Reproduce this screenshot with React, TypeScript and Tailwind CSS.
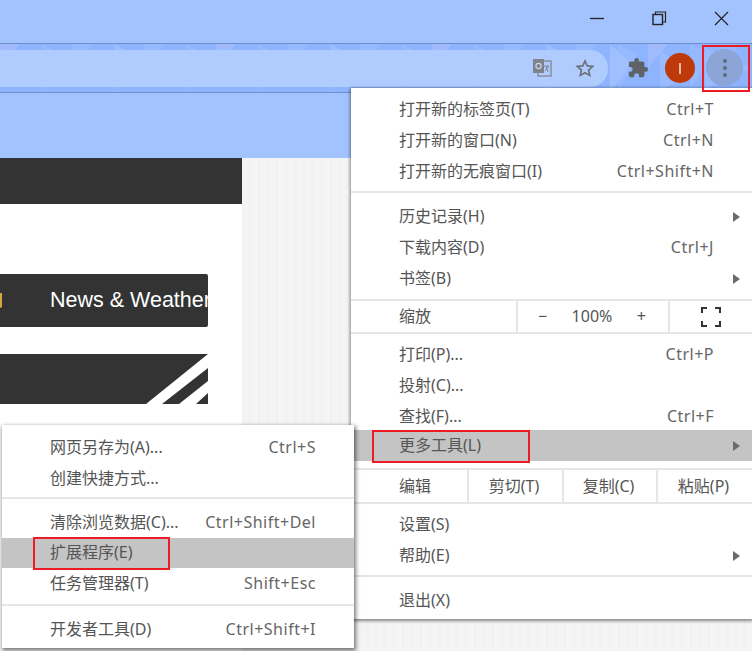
const fontStack = { fontFamily: '"Noto Sans", "Noto Sans CJK SC", sans-serif' }

type RowProps = {
  label: string
  keys?: string
  arrow?: boolean
  active?: boolean
  h?: string
  right?: string
}

function Row({ label, keys, arrow, active, h = "h-[31px]", right = "pr-[38px]" }: RowProps) {
  return (
    <div className={`${h} ${right} pl-[48px] pb-[2px] flex items-center justify-between relative text-[16px] text-[#555555] ${active ? "bg-[#c4c4c4]" : ""}`}>
      <span className="whitespace-nowrap">{label}</span>
      {keys && <span className="text-[#666666] tracking-[0.5px] whitespace-nowrap">{keys}</span>}
      {arrow && <span className="absolute right-[12px] top-1/2 -translate-y-1/2 border-l-[7px] border-l-[#6b6b6b] border-y-[5px] border-y-transparent" />}
    </div>
  )
}

function Sep({ className = "" }: { className?: string }) {
  return <div className={`h-[2px] bg-[#e6e6e6] ${className}`} />
}

function TrianglePattern() {
  const tris: string[] = []
  for (let i = 0; i < 22; i++) {
    const x = i * 36 + (i % 2 ? 6 : 0)
    tris.push(`${x},0 ${x + 20},${i % 2 ? 10 : 0} ${x},${i % 2 ? 48 : 24}`)
  }
  return (
    <svg className="absolute inset-0 w-full h-full" viewBox="0 0 752 48" preserveAspectRatio="none">
      {tris.map((p, i) => (
        <polygon key={i} points={p} fill={i % 3 === 0 ? "#a0bbfd" : "#97b9ff"} />
      ))}
      <polygon points="610,0 632,20 610,48" fill="#a0bffe" />
      <polygon points="660,6 690,28 660,48" fill="#9abbff" />
      <polygon points="705,4 750,24 705,46" fill="#9abbff" />
    </svg>
  )
}

function ToolbarIcons() {
  return (
    <>
      <svg className="absolute left-[532px] top-[14px]" width="20" height="20" viewBox="0 0 20 20">
        <rect x="6" y="3" width="13" height="15" fill="none" stroke="#8a8f98" strokeWidth="1.5" />
        <rect x="1" y="1" width="11" height="14" fill="#7f848c" />
        <circle cx="6.5" cy="8" r="2.6" fill="none" stroke="#c7d6f5" strokeWidth="1.2" />
        <path d="M12 8h5M14 8l2 6M17 8l-4 5" fill="none" stroke="#7f848c" strokeWidth="1" />
      </svg>
      <svg className="absolute left-[575px] top-[14px]" width="20" height="20" viewBox="0 0 24 24">
        <path d="M12 3.5l2.7 6 6.5.7-4.9 4.3 1.4 6.4L12 17.6l-5.7 3.3 1.4-6.4-4.9-4.3 6.5-.7z" fill="none" stroke="#6a7078" strokeWidth="2" />
      </svg>
      <svg className="absolute left-[627px] top-[13px]" width="22" height="22" viewBox="0 0 24 24">
        <path d="M20.5 11H19V7c0-1.1-.9-2-2-2h-4V3.5a2.5 2.5 0 0 0-5 0V5H4c-1.1 0-2 .9-2 2v3.8h1.5a2.7 2.7 0 0 1 0 5.4H2V20c0 1.100.9 2 2 2h3.800v-1.500a2.700 2.700 0 0 1 5.400 0V22H17c1.100 0 2-.9 2-2v-4h1.500a2.500 2.500 0 0 0 0-5z" fill="#5f6368" />
      </svg>
      <div className="absolute left-[665px] top-[9px] w-[30px] h-[30px] rounded-full bg-[#bf3a0a] flex items-center justify-center">
        <div className="w-[2px] h-[11px] bg-[#f0b79f]" />
      </div>
      <div className="absolute left-[706px] top-[5px] w-[37px] h-[37px] rounded-full bg-[#8aa5d6] flex flex-col items-center justify-center gap-[3px]">
        <div className="w-[4px] h-[4px] rounded-full bg-[#62697a]" />
        <div className="w-[4px] h-[4px] rounded-full bg-[#62697a]" />
        <div className="w-[4px] h-[4px] rounded-full bg-[#62697a]" />
      </div>
    </>
  )
}

function WindowControls() {
  return (
    <div className="h-[43px] bg-[#a3c3ff] flex justify-end items-start">
      <svg className="mt-[11px] mr-[47px]" width="15" height="15" viewBox="0 0 15 15">
        <path d="M0 7.500h14" stroke="#222" strokeWidth="1.300" />
      </svg>
      <svg className="mt-[11px] mr-[47px]" width="15" height="15" viewBox="0 0 15 15">
        <rect x="1" y="3.500" width="9.500" height="10" fill="none" stroke="#222" strokeWidth="1.400" />
        <path d="M3.500 3V1h10v10h-3" fill="none" stroke="#222" strokeWidth="1.200" />
      </svg>
      <svg className="mt-[11px] mr-[23px]" width="15" height="15" viewBox="0 0 15 15">
        <path d="M1 1l13 13M14 1L1 14" stroke="#222" strokeWidth="1.200" />
      </svg>
    </div>
  )
}

function Page() {
  return (
    <div className="flex h-[493px]">
      <div className="w-[242px] bg-white">
        <div className="h-[46px] bg-[#333333]" />
        <div className="mt-[70px] w-[208px] h-[53px] bg-[#333333] rounded-r-[2px] overflow-hidden flex items-center pl-[50px] relative">
          <span className="absolute left-0 top-[19px] w-[2px] h-[15px] bg-[#d9a441] rounded-br-[2px]" />
          <span className="text-[21.5px] text-white whitespace-nowrap" style={{ fontFamily: '"Liberation Sans", sans-serif' }}>News &amp; Weather</span>
        </div>
        <div className="mt-[27px] w-[208px] h-[50px] bg-[#333333] relative overflow-hidden">
          <svg className="absolute inset-0" width="208" height="50" viewBox="0 0 208 50">
            <path d="M146 50L208 0v14L162 50zM179 50L208 27v12L196 50z" fill="#ffffff" />
          </svg>
        </div>
      </div>
      <div className="flex-1 bg-[repeating-linear-gradient(90deg,#f4f4f4_0,#f4f4f4_7px,#f1f1f1_7px,#f1f1f1_9px)]" />
    </div>
  )
}

function MainMenu() {
  return (
    <div className="absolute left-[351px] top-[88px] w-[401px] h-[531px] bg-white shadow-[0_1px_3px_1px_rgba(0,0,0,0.45)] pt-[6px]">
      <Row label="打开新的标签页(T)" keys="Ctrl+T" />
      <Row label="打开新的窗口(N)" keys="Ctrl+N" />
      <Row label="打开新的无痕窗口(I)" keys="Ctrl+Shift+N" />
      <Sep className="mt-[4px] mb-[8px]" />
      <Row label="历史记录(H)" arrow />
      <Row label="下载内容(D)" keys="Ctrl+J" />
      <Row label="书签(B)" arrow />
      <Sep className="mt-[5px]" />
      <div className="h-[31px] flex items-center text-[16px] text-[#555555]">
        <div className="w-[165px] pl-[48px] pb-[1px]">缩放</div>
        <div className="h-full w-[2px] bg-[#e6e6e6]" />
        <div className="w-[150px] flex items-center justify-between pl-[20px] pr-[22px] pb-[2px]">
          <span>−</span>
          <span>100%</span>
          <span>+</span>
        </div>
        <div className="h-full w-[2px] bg-[#e6e6e6]" />
        <div className="flex-1 flex justify-center">
          <svg width="20" height="20" viewBox="0 0 20 20">
            <path d="M1 6V1h5M14 1h5v5M19 14v5h-5M6 19H1v-5" fill="none" stroke="#333" strokeWidth="2" />
          </svg>
        </div>
      </div>
      <Sep className="mb-[5px]" />
      <Row label="打印(P)..." keys="Ctrl+P" />
      <Row label="投射(C)..." />
      <Row label="查找(F)..." keys="Ctrl+F" />
      <Row label="更多工具(L)" arrow active h="h-[31px] -mt-[2px]" />
      <Sep className="mt-[7px]" />
      <div className="h-[32px] flex items-center text-[16px] text-[#555555]">
        <div className="w-[116px] pl-[48px]">编辑</div>
        <div className="h-full w-[2px] bg-[#e6e6e6]" />
        <div className="w-[93px] text-center pr-[3px]">剪切(T)</div>
        <div className="h-full w-[2px] bg-[#e6e6e6]" />
        <div className="w-[92px] text-center pr-[3px]">复制(C)</div>
        <div className="h-full w-[2px] bg-[#e6e6e6]" />
        <div className="flex-1 text-center pr-[3px]">粘贴(P)</div>
      </div>
      <Sep className="mb-[5px]" />
      <Row label="设置(S)" />
      <Row label="帮助(E)" arrow />
      <Sep className="mt-[4px] mb-[8px]" />
      <Row label="退出(X)" />
    </div>
  )
}

function MoreToolsMenu() {
  return (
    <div className="absolute left-[2px] top-[425px] w-[352px] h-[223px] bg-white shadow-[1px_2px_4px_1px_rgba(0,0,0,0.5)] pt-[7px]">
      <Row label="网页另存为(A)..." keys="Ctrl+S" />
      <Row label="创建快捷方式..." />
      <Sep className="mt-[3px] mb-[9px]" />
      <Row label="清除浏览数据(C)..." keys="Ctrl+Shift+Del" h="h-[30px]" />
      <Row label="扩展程序(E)" active h="h-[30px]" />
      <Row label="任务管理器(T)" keys="Shift+Esc" />
      <Sep className="mt-[5px] mb-[8px]" />
      <Row label="开发者工具(D)" keys="Ctrl+Shift+I" />
    </div>
  )
}

export default function App() {
  return (
    <div className="relative w-[752px] h-[651px] overflow-hidden bg-[#a3c3ff]" style={fontStack}>
      <WindowControls />
      <div className="relative h-[50px] bg-[#8fb4ff] border-y border-y-[#6f90c8]">
        <TrianglePattern />
        <div className="absolute left-0 top-[6px] w-[608px] h-[37px] bg-[#b0ccff] rounded-r-[18px]" />
        <ToolbarIcons />
      </div>
      <div className="h-[65px] bg-[#a3c3ff]" />
      <Page />
      <MainMenu />
      <MoreToolsMenu />
      <div className="absolute left-[702px] top-[45px] w-[48px] h-[47px] border-2 border-[#ed1c24]" />
      <div className="absolute left-[372px] top-[430px] w-[158px] h-[33px] border-2 border-[#ed1c24]" />
      <div className="absolute left-[33px] top-[537px] w-[137px] h-[33px] border-2 border-[#ed1c24]" />
    </div>
  )
}
